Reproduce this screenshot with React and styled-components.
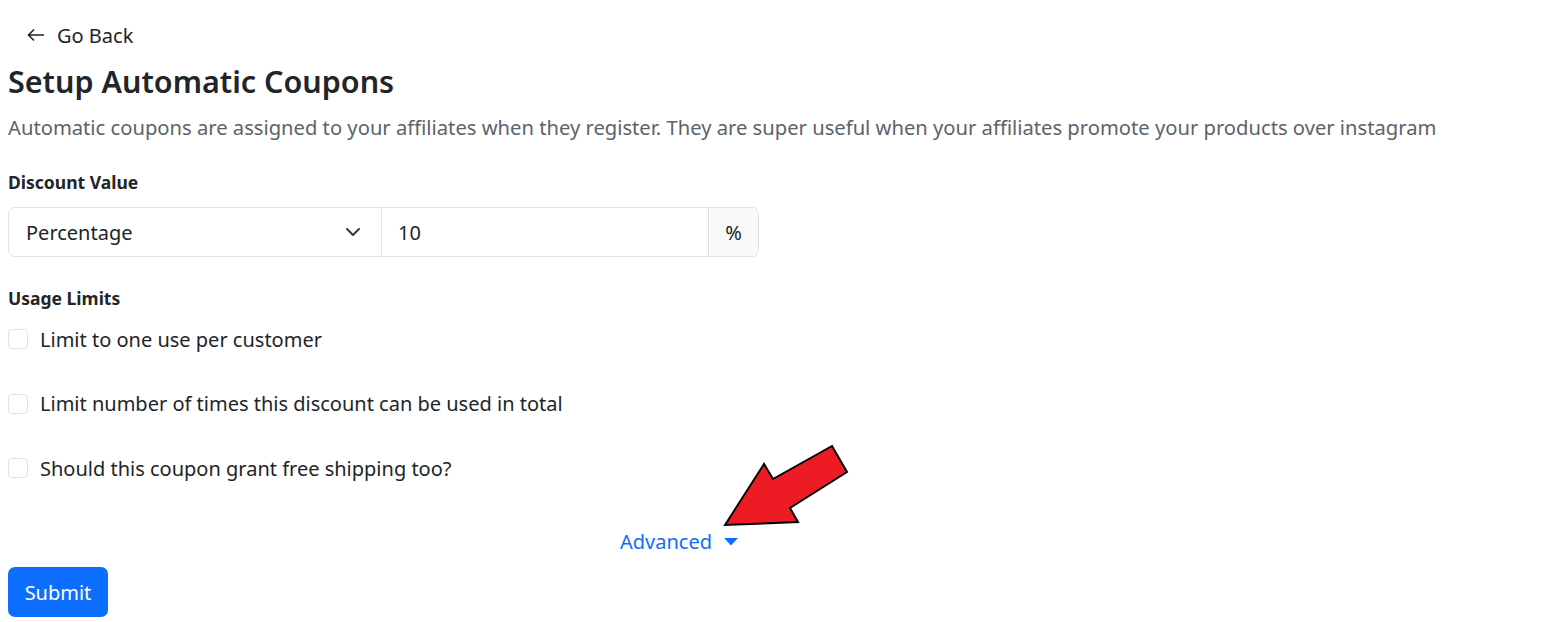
import React from "react";
import styled, { createGlobalStyle } from "styled-components";

const Global = createGlobalStyle`
  body {
    margin: 8px;
    font-family: "Noto Sans", "Open Sans", sans-serif;
    color: #212529;
    background: #fff;
  }
  * { box-sizing: border-box; }
`;

const Page = styled.div`
  position: relative;
  display: flex;
  flex-direction: column;
  align-items: flex-start;
`;

const BackButton = styled.button`
  display: flex;
  align-items: center;
  gap: 12px;
  border: none;
  background: none;
  padding: 0 0 0 19px;
  margin-top: 14px;
  height: 26px;
  font-family: inherit;
  font-size: 20px;
  color: #212529;
  cursor: pointer;
`;

const Title = styled.h1`
  margin: 14px 0 0;
  font-size: 30.5px;
  font-weight: 600;
  line-height: 38px;
`;

const Lead = styled.p`
  margin: 12px 0 0;
  font-size: 20.2px;
  line-height: 30px;
  color: #5c636a;
`;

const Label = styled.div`
  margin-top: ${(p) => p.$top}px;
  font-size: 17.5px;
  font-weight: 700;
  line-height: 24px;
`;

const InputGroup = styled.div`
  display: flex;
  width: 751px;
  height: 50px;
  margin-top: 13px;
  border: 1px solid #dee2e6;
  border-radius: 7px;
  overflow: hidden;
`;

const SelectBox = styled.div`
  flex: 0 0 373px;
  display: flex;
  align-items: center;
  justify-content: space-between;
  padding: 0 20px 0 17px;
  font-size: 20px;
  border-right: 1px solid #dee2e6;
`;

const ValueInput = styled.div`
  flex: 1;
  display: flex;
  align-items: center;
  padding: 0 16px;
  font-size: 20px;
`;

const Addon = styled.div`
  flex: 0 0 50px;
  display: flex;
  align-items: center;
  justify-content: center;
  font-size: 20px;
  background: #f8f9fa;
  border-left: 1px solid #dee2e6;
`;

const CheckList = styled.div`
  display: flex;
  flex-direction: column;
  gap: 34.5px;
  margin-top: 14px;
`;

const CheckRow = styled.label`
  display: flex;
  align-items: center;
  gap: 12px;
  height: 30px;
  font-size: 20px;
`;

const Box = styled.span`
  width: 20px;
  height: 20px;
  border: 1px solid #dee2e6;
  border-radius: 4px;
  background: #fff;
`;

const AdvancedRow = styled.div`
  display: flex;
  align-items: center;
  gap: 12px;
  margin: 44px 0 0 612px;
  font-size: 20px;
  color: #0d6efd;
  line-height: 30px;
`;

const SubmitButton = styled.button`
  margin-top: 10px;
  width: 100px;
  height: 50px;
  border: none;
  border-radius: 7px;
  background: #0d6efd;
  color: #fff;
  font-family: inherit;
  font-size: 20px;
`;

const Annotation = styled.svg`
  position: absolute;
  left: -8px;
  top: -8px;
  pointer-events: none;
`;

export default function App() {
  return (
    <>
      <Global />
      <Page>
        <BackButton>
          <svg width="18" height="14" viewBox="0 0 18 14">
            <path d="M17 7H1.5M7 1.5L1.5 7L7 12.5" fill="none" stroke="#212529" strokeWidth="1.6" />
          </svg>
          Go Back
        </BackButton>
        <Title>Setup Automatic Coupons</Title>
        <Lead>
          Automatic coupons are assigned to your affiliates when they register. They are super useful when your affiliates promote your products over instagram
        </Lead>
        <Label $top={28}>Discount Value</Label>
        <InputGroup>
          <SelectBox>
            Percentage
            <svg width="16" height="16" viewBox="0 0 16 16">
              <path d="M2 5l6 6 6-6" fill="none" stroke="#343a40" strokeWidth="2" strokeLinecap="round" strokeLinejoin="round" />
            </svg>
          </SelectBox>
          <ValueInput>10</ValueInput>
          <Addon>%</Addon>
        </InputGroup>
        <Label $top={29}>Usage Limits</Label>
        <CheckList>
          <CheckRow><Box />Limit to one use per customer</CheckRow>
          <CheckRow><Box />Limit number of times this discount can be used in total</CheckRow>
          <CheckRow><Box />Should this coupon grant free shipping too?</CheckRow>
        </CheckList>
        <AdvancedRow>
          Advanced
          <svg width="14" height="8" viewBox="0 0 14 8">
            <path d="M0 0h14L7 7.5z" fill="#0d6efd" />
          </svg>
        </AdvancedRow>
        <SubmitButton>Submit</SubmitButton>
        <Annotation width="1554" height="622" viewBox="0 0 1554 622">
          <polygon
            points="725,525 764,464 773,479 832,446 847,472 790,508 798,522"
            fill="#ed1c24"
            stroke="#000"
            strokeWidth="2"
            strokeLinejoin="miter"
          />
        </Annotation>
      </Page>
    </>
  );
}
